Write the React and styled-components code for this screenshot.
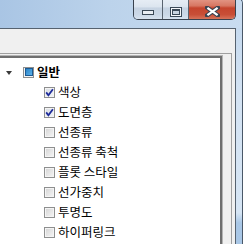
import React from 'react';
import styled, { createGlobalStyle } from 'styled-components';

const items = [
  { label: '색상', checked: true },
  { label: '도면층', checked: true },
  { label: '선종류' },
  { label: '선종류 축척' },
  { label: '플롯 스타일' },
  { label: '선가중치' },
  { label: '투명도' },
  { label: '하이퍼링크' },
];

export default function App() {
  return (
    <>
      <GlobalStyle />
      <Window>
        <TitleBar>
          <CaptionGroup>
            <CaptionButton $width={28}>
              <MinGlyph />
            </CaptionButton>
            <CaptionButton $width={25}>
              <MaxGlyph>
                <MaxInner />
              </MaxGlyph>
            </CaptionButton>
            <CaptionButton $width={46} $close>
              <svg width='15' height='11' viewBox='0 0 15 11'>
                <path d='M2 1.5 L13 9.5 M13 1.5 L2 9.5' stroke='#3a4350' strokeWidth='4.2' strokeLinecap='square' />
                <path d='M2.4 1.9 L12.6 9.1 M12.6 1.9 L2.4 9.1' stroke='#ffffff' strokeWidth='2.2' />
              </svg>
            </CaptionButton>
          </CaptionGroup>
        </TitleBar>
        <Client>
          <Panel>
            <Tree>
              <Row $indent={6}>
                <Expander />
                <ParentBox>
                  <ParentFill />
                </ParentBox>
                <Label $bold>일반</Label>
              </Row>
              {items.map((item) => (
                <Row key={item.label} $indent={44}>
                  <CheckBox $checked={item.checked}>
                    {item.checked && (
                      <svg width='9' height='9' viewBox='0 0 9 9'>
                        <path d='M1.2 4.4 L3.4 7.2 L7.9 1.2' fill='none' stroke='#1e2b9a' strokeWidth='1.8' />
                      </svg>
                    )}
                  </CheckBox>
                  <Label>{item.label}</Label>
                </Row>
              ))}
            </Tree>
          </Panel>
        </Client>
      </Window>
    </>
  );
}

const GlobalStyle = createGlobalStyle`
  html, body {
    margin: 0;
    padding: 0;
    width: 243px;
    height: 244px;
    overflow: hidden;
    background: #c4d8ee;
  }

  #root {
    width: 243px;
    height: 244px;
    overflow: hidden;
  }
`;

const Window = styled.div`
  width: 243px;
  height: 252px;
  margin-top: -4px;
  box-sizing: border-box;
  border-top: 1px solid #4a5868;
  border-right: 1px solid #4a5868;
  border-top-right-radius: 8px;
  background: linear-gradient(
    180deg,
    #c0d6ed 0%,
    #d4e3f3 40%,
    #d6e5f4 86%,
    #a9c7e6 90%,
    #a9c7e6 100%
  );
  display: flex;
  flex-direction: column;
  overflow: hidden;
`;

const TitleBar = styled.div`
  height: 31px;
  flex-shrink: 0;
  display: flex;
  justify-content: flex-end;
  align-items: flex-start;
  padding-right: 6px;
  background: linear-gradient(90deg, #a9c5e4 0%, #bcd3eb 45%, #c9dcf0 100%);
`;

const CaptionGroup = styled.div`
  display: flex;
  height: 23px;
  box-sizing: border-box;
  border: 1px solid #39424e;
  border-top: none;
  border-radius: 0 0 5px 5px;
  overflow: hidden;
`;

const CaptionButton = styled.div`
  width: ${(p) => p.$width}px;
  box-sizing: content-box;
  display: flex;
  justify-content: center;
  align-items: center;
  padding-top: 7px;
  height: 15px;
  background: ${(p) =>
    p.$close
      ? 'linear-gradient(180deg, #e7a192 0%, #d77762 40%, #c5442d 50%, #c84f37 80%, #d6735a 100%)'
      : 'linear-gradient(180deg, #eaf0f7 0%, #dce5ef 45%, #c6d3e2 50%, #cbd8e7 80%, #d7e2ee 100%)'};

  & + & {
    border-left: 1px solid #59636f;
  }
`;

const MinGlyph = styled.div`
  width: 10px;
  height: 3px;
  border: 1px solid #3b4957;
  background: #e9eef4;
  margin-top: 2px;
`;

const MaxGlyph = styled.div`
  width: 8px;
  height: 6px;
  border: 1px solid #3b4957;
  background: #f5f7fa;
  padding: 1px;
  box-sizing: content-box;
  display: flex;
`;

const MaxInner = styled.div`
  flex: 1;
  border: 1px solid #3b4957;
  border-top-width: 2px;
  background: #c9d4e0;
`;

const Client = styled.div`
  flex: 1;
  width: 236px;
  box-sizing: border-box;
  border-top: 1px solid #56626f;
  border-right: 1px solid #56626f;
  background: #f0f0f0;
  padding-top: 24px;
  display: flex;
  flex-direction: column;
`;

const Panel = styled.div`
  flex: 1;
  width: 232px;
  box-sizing: border-box;
  border-top: 1px solid #a0a0a0;
  border-right: 1px solid #a0a0a0;
  padding-top: 1px;
  padding-right: 8px;
  display: flex;
  flex-direction: column;
`;

const Tree = styled.div`
  flex: 1;
  background: #ffffff;
  border-top: 1px solid #b4b4b4;
  border-right: 1px solid #b4b4b4;
  box-shadow: inset -2px 2px 0 #6f6f6f;
  padding-top: 6px;
  display: flex;
  flex-direction: column;
`;

const Row = styled.div`
  display: flex;
  align-items: center;
  height: 20px;
  padding-left: ${(p) => p.$indent}px;
`;

const Expander = styled.div`
  width: 0;
  height: 0;
  border-left: 3px solid transparent;
  border-right: 3px solid transparent;
  border-top: 4px solid #3a3a3a;
  margin-right: 11px;
  margin-top: 2px;
`;

const ParentBox = styled.div`
  width: 9px;
  height: 9px;
  border: 1px solid #8e8f8f;
  background: #f4f4f4;
  display: flex;
  align-items: center;
  justify-content: center;
  margin-right: 3px;
`;

const ParentFill = styled.div`
  width: 6px;
  height: 6px;
  border: 1px solid #1c5a94;
  background: linear-gradient(135deg, #2a84c8 0%, #5cb1e8 100%);
`;

const CheckBox = styled.div`
  width: 9px;
  height: 9px;
  border: 1px solid #8e8f8f;
  background: ${(p) =>
    p.$checked
      ? 'linear-gradient(135deg, #d8dde3 0%, #f2f4f7 100%)'
      : 'linear-gradient(135deg, #d3d3d3 0%, #f6f6f6 100%)'};
  box-shadow: inset 0 0 0 1px #f4f4f4;
  display: flex;
  align-items: center;
  justify-content: center;
  margin-right: 3px;
`;

const Label = styled.span`
  font-family: 'Noto Sans CJK KR', 'Noto Sans', sans-serif;
  font-size: 12.5px;
  font-weight: ${(p) => (p.$bold ? 700 : 400)};
  line-height: 20px;
  color: #000000;
  white-space: nowrap;
`;
